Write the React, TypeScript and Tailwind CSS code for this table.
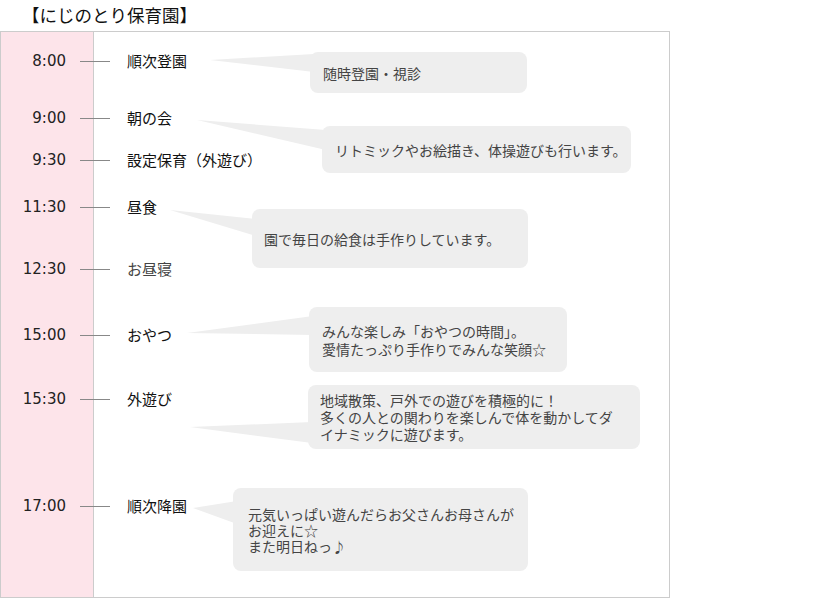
import React from "react";

type Bubble = {
  cls: string;
  lines: string[];
  tailCls: string;
  tailW: number;
  tailH: number;
  points: string;
};

type Row = {
  time: string;
  label: string;
  rowCls: string;
  offCls: string;
  labelCls: string;
  bubble?: Bubble;
};

const rows: Row[] = [
  {
    time: "8:00",
    label: "順次登園",
    rowCls: "h-[58px]",
    offCls: "mt-[19px]",
    labelCls: "text-[#111]",
    bubble: {
      cls: "mt-[20px] ml-[77px] w-[217px] h-[41px] pl-[13px] leading-[18px]",
      lines: ["随時登園・視診"],
      tailCls: "-left-[100px] top-[2px]",
      tailW: 104,
      tailH: 18,
      points: "0,6 104,0 104,18",
    },
  },
  {
    time: "9:00",
    label: "朝の会",
    rowCls: "h-[50px]",
    offCls: "mt-[18px]",
    labelCls: "text-[#111]",
    bubble: {
      cls: "mt-[36px] ml-[89px] w-[309px] h-[47px] pl-[13px] leading-[18px]",
      lines: ["リトミックやお絵描き、体操遊びも行います。"],
      tailCls: "-left-[125px] -top-[6px]",
      tailW: 129,
      tailH: 30,
      points: "0,0 129,10 129,30",
    },
  },
  { time: "9:30", label: "設定保育（外遊び）", rowCls: "h-[45px]", offCls: "mt-[10px]", labelCls: "text-[#111]" },
  {
    time: "11:30",
    label: "昼食",
    rowCls: "h-[60px]",
    offCls: "mt-[12px]",
    labelCls: "text-[#111]",
    bubble: {
      cls: "mt-[24px] ml-[19px] w-[276px] h-[59px] pl-[12px] leading-[18px]",
      lines: ["園で毎日の給食は手作りしています。"],
      tailCls: "-left-[82px] top-[1px]",
      tailW: 86,
      tailH: 26,
      points: "0,0 86,9 86,26",
    },
  },
  { time: "12:30", label: "お昼寝", rowCls: "h-[50px]", offCls: "mt-[14px]", labelCls: "text-[#444]" },
  {
    time: "15:00",
    label: "おやつ",
    rowCls: "h-[75px]",
    offCls: "mt-[30px]",
    labelCls: "text-[#111]",
    bubble: {
      cls: "mt-[12px] ml-[76px] w-[258px] h-[65px] pl-[13px] leading-[18px]",
      lines: ["みんな楽しみ「おやつの時間」。", "愛情たっぷり手作りでみんな笑顔☆"],
      tailCls: "-left-[122px] top-[9px]",
      tailW: 126,
      tailH: 19,
      points: "0,17 126,0 126,19",
    },
  },
  {
    time: "15:30",
    label: "外遊び",
    rowCls: "h-[100px]",
    offCls: "mt-[19px]",
    labelCls: "text-[#111]",
    bubble: {
      cls: "mt-[15px] ml-[75px] w-[332px] h-[64px] pl-[12px] leading-[17px]",
      lines: ["地域散策、戸外での遊びを積極的に！", "多くの人との関わりを楽しんで体を動かしてダ", "イナミックに遊びます。"],
      tailCls: "-left-[118px] top-[37px]",
      tailW: 122,
      tailH: 21,
      points: "0,5 122,0 122,21",
    },
  },
  {
    time: "17:00",
    label: "順次降園",
    rowCls: "h-[127px]",
    offCls: "mt-[26px]",
    labelCls: "text-[#111]",
    bubble: {
      cls: "mt-[18px] ml-0 w-[295px] h-[83px] pl-[15px] leading-[16px]",
      lines: ["元気いっぱい遊んだらお父さんお母さんが", "お迎えに☆", "また明日ねっ♪"],
      tailCls: "-left-[40px] top-[13px]",
      tailW: 44,
      tailH: 23,
      points: "0,7 44,0 44,23",
    },
  },
];

function SpeechBubble({ b }: { b: Bubble }) {
  return (
    <div
      className={clsx(
        "relative shrink-0 bg-[#eeeeee] rounded-[8px] flex flex-col justify-center text-[14px] text-[#444]",
        b.cls
      )}
    >
      <svg
        className={clsx("absolute", b.tailCls)}
        width={b.tailW}
        height={b.tailH}
        viewBox={`0 0 ${b.tailW} ${b.tailH}`}
      >
        <polygon points={b.points} fill="#eeeeee" />
      </svg>
      {b.lines.map((l) => (
        <div key={l} className="relative whitespace-nowrap">
          {l}
        </div>
      ))}
    </div>
  );
}

function clsx(...parts: string[]) {
  return parts.filter(Boolean).join(" ");
}

export default function App() {
  return (
    <div className="w-[819px] h-[600px] bg-white text-[#222] font-['Noto_Sans_CJK_JP','Noto_Sans',sans-serif]">
      <div className="h-[31px] pl-[22px] pt-[3px] text-[17.5px] leading-[24px] text-[#111]">【にじのとり保育園】</div>
      <div className="w-[670px] h-[567px] border border-[#cccccc] bg-[linear-gradient(to_right,#fde4ea_92px,#cccccc_92px,#cccccc_93px,#ffffff_93px)] flex flex-col">
        {rows.map((r) => (
          <div key={r.time} className={clsx("flex items-start shrink-0", r.rowCls)}>
            <div className={clsx("flex items-center h-[20px] shrink-0", r.offCls)}>
              <div className="w-[65px] text-right text-[15px] leading-[20px] text-[#222] font-['DejaVu_Sans','Noto_Sans',sans-serif]">
                {r.time}
              </div>
              <div className="ml-[14px] w-[30px] h-px bg-[#888888]" />
              <div className={clsx("ml-[17px] w-[106px] whitespace-nowrap text-[15px] leading-[20px]", r.labelCls)}>
                {r.label}
              </div>
            </div>
            {r.bubble && <SpeechBubble b={r.bubble} />}
          </div>
        ))}
      </div>
    </div>
  );
}
